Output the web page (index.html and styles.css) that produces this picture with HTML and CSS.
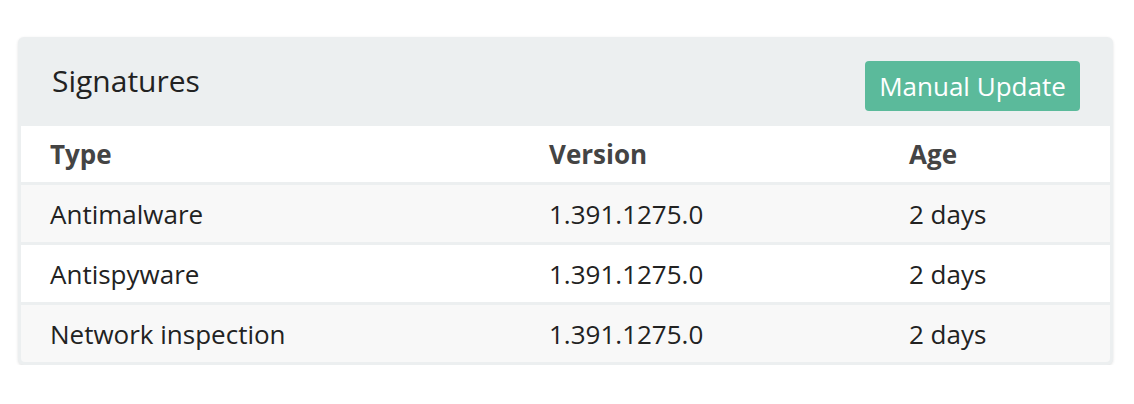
FILE: index.html
```html
<!DOCTYPE html>
<html>
<head>
<meta charset="utf-8">
<link rel="stylesheet" href="styles.css">
</head>
<body>
<div class="card">
  <div class="card-header">
    <h2 class="title">Signatures</h2>
    <button class="btn">Manual Update</button>
  </div>
  <div class="table">
    <div class="row head">
      <div class="cell">Type</div>
      <div class="cell">Version</div>
      <div class="cell">Age</div>
    </div>
    <div class="row odd">
      <div class="cell">Antimalware</div>
      <div class="cell">1.391.1275.0</div>
      <div class="cell">2 days</div>
    </div>
    <div class="row even">
      <div class="cell">Antispyware</div>
      <div class="cell">1.391.1275.0</div>
      <div class="cell">2 days</div>
    </div>
    <div class="row odd">
      <div class="cell">Network inspection</div>
      <div class="cell">1.391.1275.0</div>
      <div class="cell">2 days</div>
    </div>
  </div>
</div>
</body>
</html>
```

FILE: styles.css
```css
html, body {
  margin: 0;
  padding: 0;
  background: #fff;
}
body {
  padding: 37px 21px 0 18px;
  font-family: "Open Sans", "Noto Sans", sans-serif;
  color: #222;
}
.card {
  background: #eceff0;
  border-radius: 6px;
  padding: 0 3px 3px 3px;
  box-shadow: 0 1px 3px rgba(0,0,0,0.12);
}
.card-header {
  height: 89px;
  display: flex;
  align-items: center;
  justify-content: space-between;
  padding: 0 30px 0 31px;
}
.title {
  margin: 0;
  font-weight: 400;
  font-size: 30px;
  color: #222;
  position: relative;
  top: -1px;
}
.btn {
  font-family: inherit;
  background: #5bba9b;
  color: #fff;
  border: none;
  border-radius: 4px;
  height: 50px;
  width: 215px;
  font-size: 26px;
  padding: 0;
  margin-top: 9px;
}
.table {
  display: flex;
  flex-direction: column;
  gap: 3px;
  border-radius: 0 0 4px 4px;
  overflow: hidden;
}
.row {
  display: grid;
  grid-template-columns: 499px 360px 1fr;
  height: 57px;
  align-items: center;
  font-size: 26px;
}
.row.head {
  height: 56px;
  background: #fff;
  font-weight: 700;
  color: #444;
}
.row.odd { background: #f8f8f8; }
.row.even { background: #fff; }
.cell {
  padding-left: 29px;
}
```
